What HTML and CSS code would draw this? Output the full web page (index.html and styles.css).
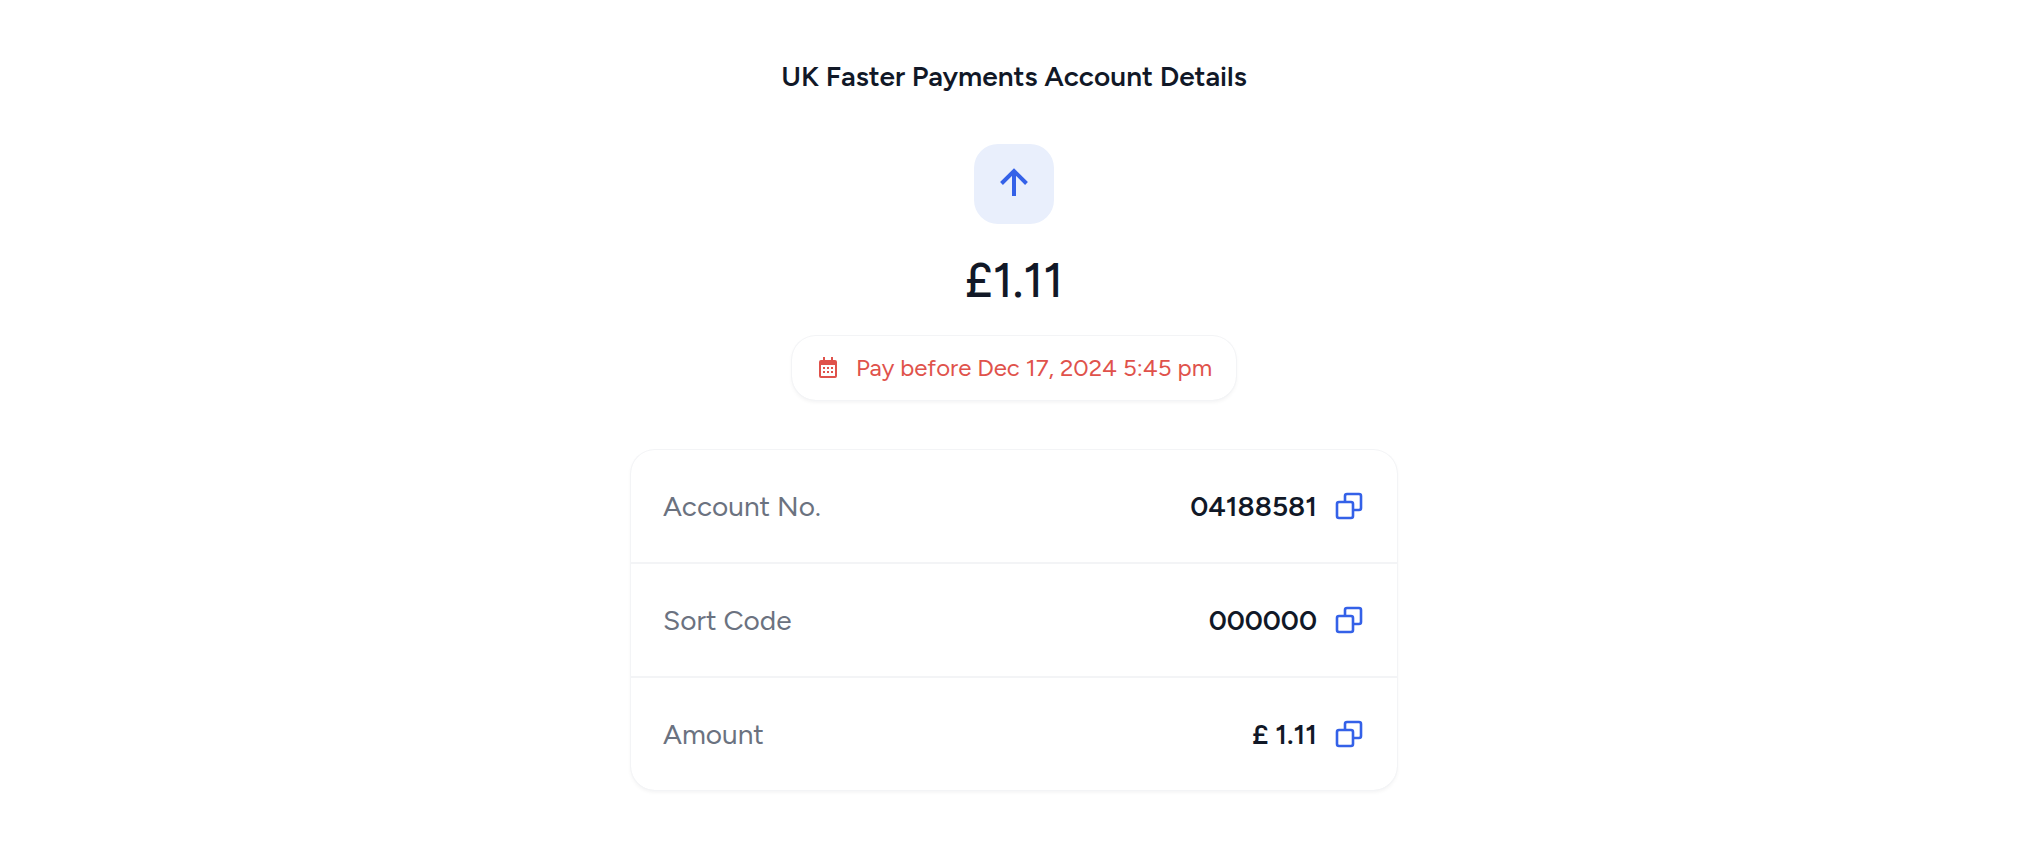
FILE: index.html
```html
<!DOCTYPE html>
<html lang="en">
  <head>
    <meta charset="UTF-8" />
    <meta name="viewport" content="width=device-width, initial-scale=1.0" />
    <title>UK Faster Payments Account Details</title>
    <link rel="stylesheet" href="styles.css">
  </head>
  <body>
    <main class="payment">
      <h1 class="title">UK Faster Payments Account Details</h1>
      <div class="arrow-box">
        <svg width="42" height="42" viewBox="0 0 42 42" aria-hidden="true">
          <path d="M21 35V10M8.500 22.500L21 10l12.500 12.500" fill="none" stroke="currentColor" stroke-width="4" />
        </svg>
      </div>
      <p class="price">£1.11</p>
      <div class="deadline">
        <svg width="24" height="24" viewBox="0 0 24 24" fill="currentColor" aria-hidden="true">
          <path fill-rule="evenodd" d="M7 1h2v3h6V1h2v3h2a2 2 0 0 1 2 2v14a2 2 0 0 1-2 2H5a2 2 0 0 1-2-2V6a2 2 0 0 1 2-2h2zM5 9v11h14V9z" />
          <path d="M7 11h2v2H7zM11 11h2v2h-2zM15 11h2v2h-2zM7 15h2v2H7zM11 15h2v2h-2zM15 15h2v2h-2z" />
        </svg>
        <span>Pay before Dec 17, 2024 5:45 pm</span>
      </div>

      <dl class="details">
        <div class="row">
          <dt>Account No.</dt>
          <dd>
            04188581
            <button type="button" class="copy" aria-label="Copy account number">
              <svg width="28" height="28" viewBox="0 0 28 28" aria-hidden="true">
                <rect x="2" y="10" width="16" height="16" rx="2" />
                <path d="M10 10V4a2 2 0 0 1 2-2h12a2 2 0 0 1 2 2v12a2 2 0 0 1-2 2h-6" />
              </svg>
            </button>
          </dd>
        </div>
        <div class="row">
          <dt>Sort Code</dt>
          <dd>
            000000
            <button type="button" class="copy" aria-label="Copy sort code">
              <svg width="28" height="28" viewBox="0 0 28 28" aria-hidden="true">
                <rect x="2" y="10" width="16" height="16" rx="2" />
                <path d="M10 10V4a2 2 0 0 1 2-2h12a2 2 0 0 1 2 2v12a2 2 0 0 1-2 2h-6" />
              </svg>
            </button>
          </dd>
        </div>
        <div class="row">
          <dt>Amount</dt>
          <dd>
            £ 1.11
            <button type="button" class="copy" aria-label="Copy amount">
              <svg width="28" height="28" viewBox="0 0 28 28" aria-hidden="true">
                <rect x="2" y="10" width="16" height="16" rx="2" />
                <path d="M10 10V4a2 2 0 0 1 2-2h12a2 2 0 0 1 2 2v12a2 2 0 0 1-2 2h-6" />
              </svg>
            </button>
          </dd>
        </div>
      </dl>
    </main>
  </body>
</html>
```
FILE: styles.css
```css
* {
  padding: 0;
  margin: 0;
  box-sizing: border-box;
}
body {
  background: #fff;
  color: #111827;
  font-family: Figtree, Lato, sans-serif;
  padding-right: 4px;
}
.payment {
  display: flex;
  flex-direction: column;
  align-items: center;
  padding: 56px 16px;
}
.title {
  font-size: 28px;
  line-height: 40px;
  font-weight: 600;
}
.arrow-box {
  display: flex;
  justify-content: center;
  align-items: center;
  width: 80px;
  height: 80px;
  margin-top: 48px;
  padding-bottom: 4px;
  border-radius: 24px;
  background: #e9effc;
  color: #3461e8;
}
.price {
  margin-top: 24px;
  font-size: 48px;
  line-height: 64px;
  font-weight: 500;
}
.deadline {
  display: flex;
  align-items: center;
  gap: 16px;
  margin-top: 24px;
  padding: 16px 24px;
  border-radius: 24px;
  box-shadow: 0 0 0 1px #f3f4f6, 0 2px 4px rgba(17, 24, 39, 0.06);
  color: #e0524b;
  font-size: 24px;
  line-height: 32px;
}
.details {
  width: 100%;
  max-width: 766px;
  margin-top: 50px;
  border-radius: 24px;
  box-shadow: 0 0 0 1px #f3f4f6, 0 2px 4px rgba(17, 24, 39, 0.06);
  font-size: 28px;
  line-height: 40px;
}
.row {
  display: flex;
  justify-content: space-between;
  align-items: center;
  height: 112px;
  padding: 0 34px 0 32px;
  box-sizing: content-box;
}
.row + .row {
  border-top: 2px solid #f3f4f6;
}
.row dt {
  color: #6b7280;
}
.row dd {
  display: flex;
  align-items: center;
  gap: 18px;
  font-weight: 600;
}
.copy {
  display: flex;
  border: none;
  background: none;
  cursor: pointer;
}
.copy svg {
  fill: none;
  stroke: #3461e8;
  stroke-width: 2.6;
}
```
